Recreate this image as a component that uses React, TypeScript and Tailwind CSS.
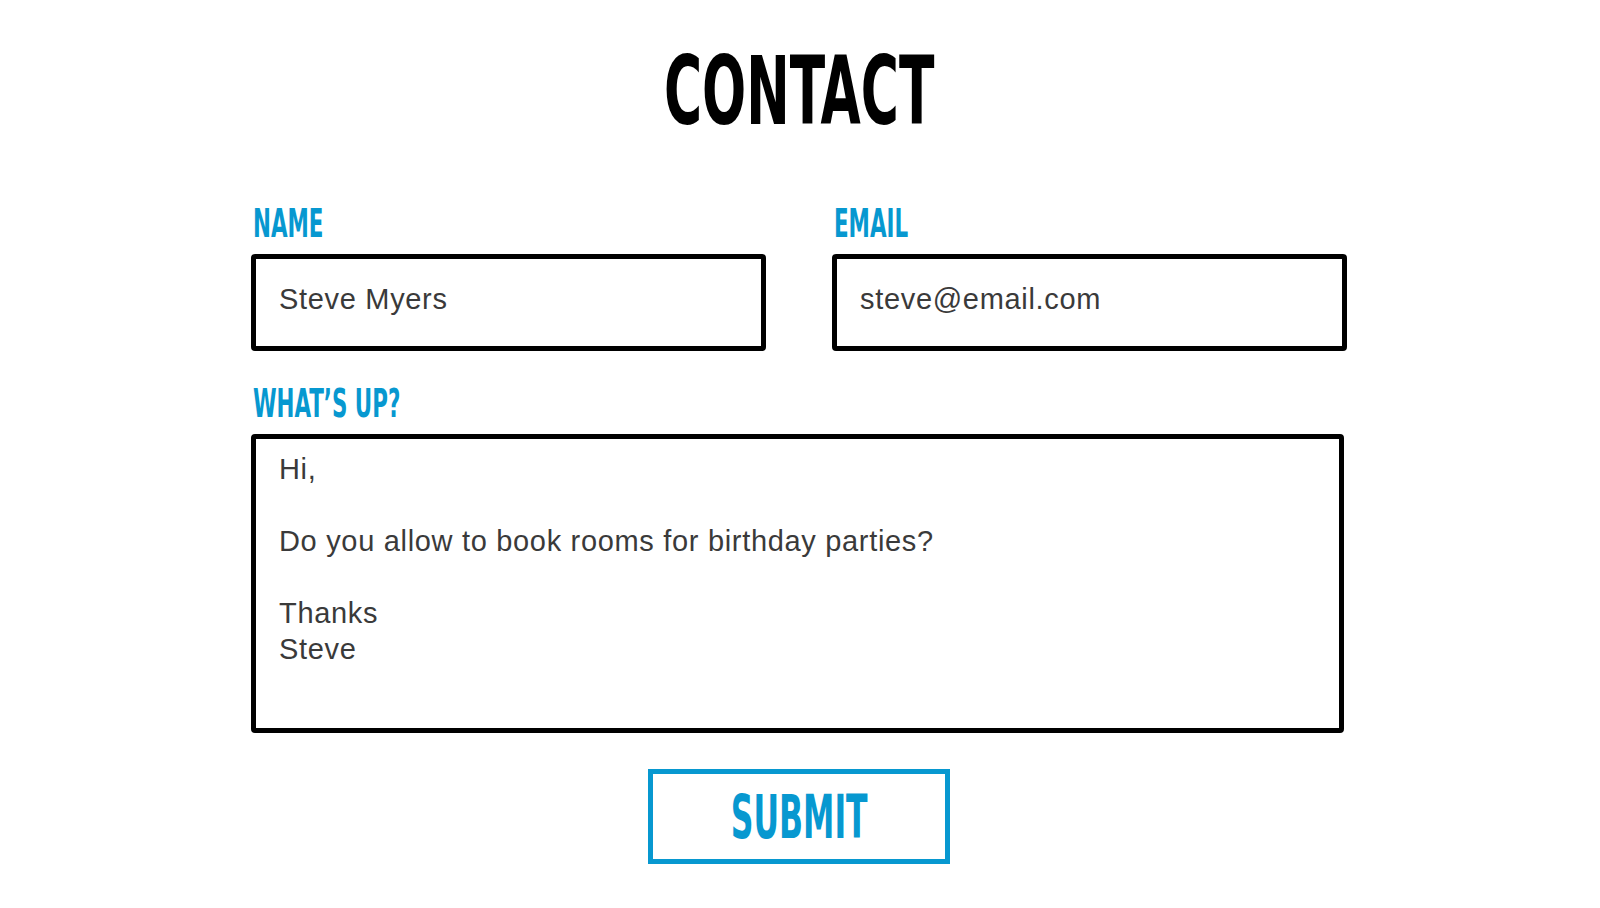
const BLUE = "text-[#0798d0]";

const display = { fontFamily: '"Liberation Sans Narrow", "DejaVu Sans Condensed", "Liberation Sans", sans-serif' };
const body = { fontFamily: '"Liberation Sans", Arial, sans-serif' };

function Label({ children }: { children: string }) {
  return (
    <div className="h-[39px] mb-[11px] pl-[2px] leading-[39px]">
      <span
        style={display}
        className={`inline-block origin-left scale-x-[0.61] text-[39px] font-bold uppercase ${BLUE}`}
      >
        {children}
      </span>
    </div>
  );
}

export default function App() {
  const message = "Hi,\n\nDo you allow to book rooms for birthday parties?\n\nThanks\nSteve";

  return (
    <div className="min-h-[908px] w-full bg-white">
      <div className="mx-auto w-[1096px] -translate-x-px pt-[42px]">
        <h1 className="flex h-[99px] justify-center leading-[99px]">
          <span style={display} className="inline-block scale-x-[0.614] text-[94px] font-bold text-black">
            CONTACT
          </span>
        </h1>

        <div className="mt-[63px] grid grid-cols-2 gap-[66px]">
          <div>
            <Label>Name</Label>
            <input
              style={body}
              defaultValue="Steve Myers"
              className="h-[97px] w-full rounded-[4px] border-[5px] border-black px-[23px] pb-[7px] text-[29px] tracking-[0.68px] text-[#3a3a3a] outline-none"
            />
          </div>
          <div>
            <Label>Email</Label>
            <input
              style={body}
              defaultValue="steve@email.com"
              className="h-[97px] w-full rounded-[4px] border-[5px] border-black px-[23px] pb-[7px] text-[29px] tracking-[0.68px] text-[#3a3a3a] outline-none"
            />
          </div>
        </div>

        <div className="mt-[33px]">
          <Label>What’s up?</Label>
          <textarea
            style={body}
            defaultValue={message}
            className="block h-[299px] w-[1093px] resize-none rounded-[4px] border-[5px] border-black px-[23px] pt-[12px] text-[29px] leading-[36px] tracking-[0.68px] text-[#3a3a3a] outline-none"
          />
        </div>

        <div className="mt-[36px] flex justify-center">
          <button className="flex h-[95px] w-[302px] items-center justify-center border-[5px] border-[#0798d0] bg-white">
            <span style={display} className={`inline-block scale-x-[0.574] text-[61px] leading-[61px] font-bold ${BLUE}`}>
              SUBMIT
            </span>
          </button>
        </div>
      </div>
    </div>
  );
}
